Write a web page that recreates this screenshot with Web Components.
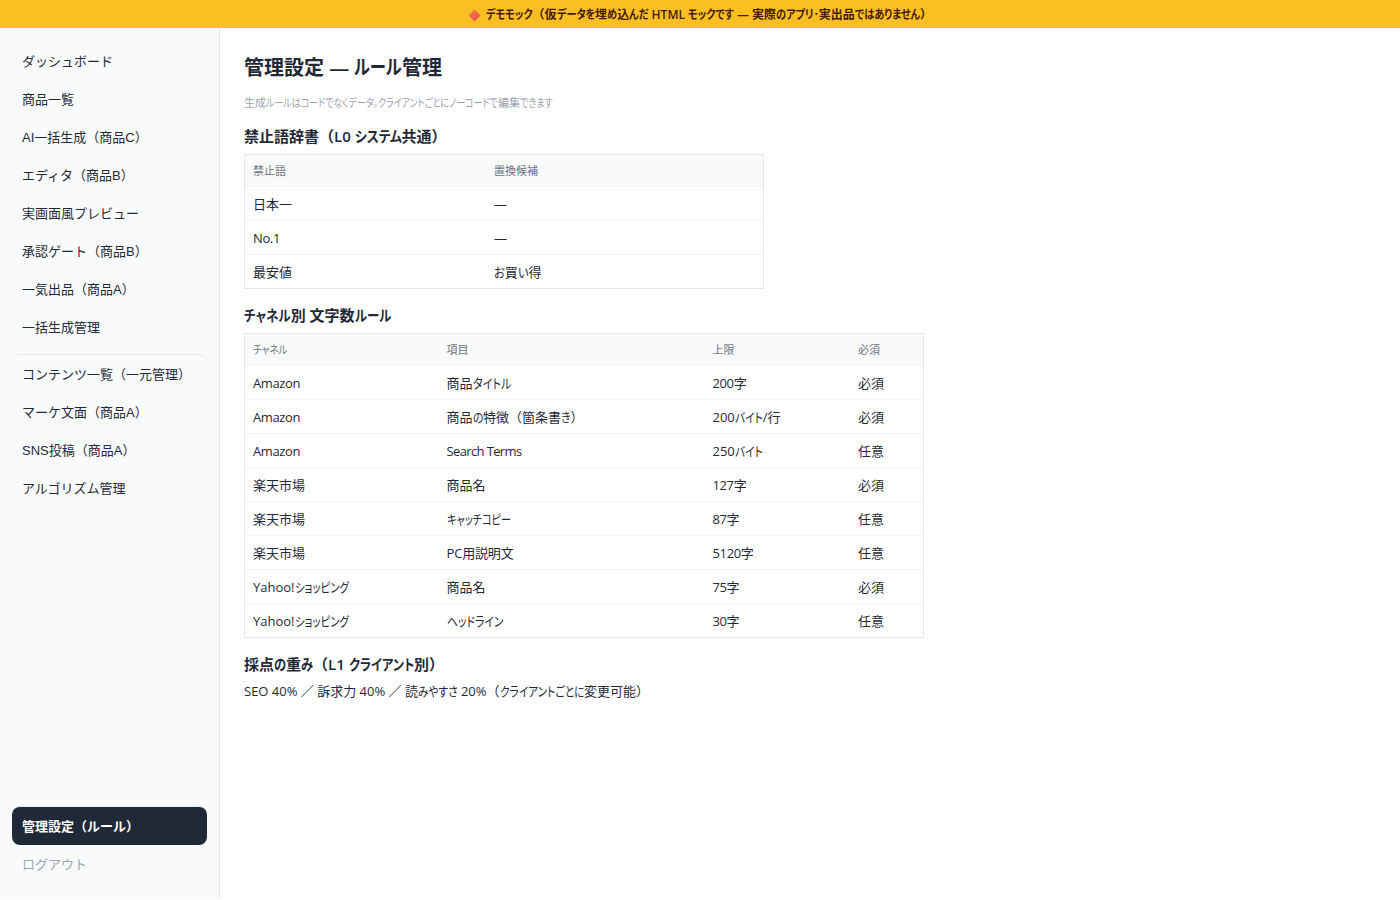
<!DOCTYPE html>
<html lang="ja">
<head>
<meta charset="utf-8">
<title>管理設定 — ルール管理</title>
<style>
    body {
        margin: 0;
        background: #fff;
        color: #1f2937;
        font: 13px/20px "Open Sans", "Noto Sans CJK JP", sans-serif;
    }
</style>
</head>
<body>
<demo-app>
    <demo-banner slot="banner"><fit-text w="446">デモモック（仮データを埋め込んだ HTML モックです — 実際のアプリ･実出品ではありません）</fit-text></demo-banner>

    <side-nav slot="nav">
        <nav-item>ダッシュボード</nav-item>
        <nav-item>商品一覧</nav-item>
        <nav-item>AI一括生成（商品C）</nav-item>
        <nav-item>エディタ（商品B）</nav-item>
        <nav-item>実画面風プレビュー</nav-item>
        <nav-item>承認ゲート（商品B）</nav-item>
        <nav-item>一気出品（商品A）</nav-item>
        <nav-item>一括生成管理</nav-item>
        <nav-item divided>コンテンツ一覧（一元管理）</nav-item>
        <nav-item>マーケ文面（商品A）</nav-item>
        <nav-item>SNS投稿（商品A）</nav-item>
        <nav-item>アルゴリズム管理</nav-item>
        <nav-item slot="bottom" active>管理設定（ルール）</nav-item>
        <nav-item slot="bottom" muted>ログアウト</nav-item>
    </side-nav>

    <page-heading>
        <fit-text w="198">管理設定 — ルール管理</fit-text>
        <fit-text slot="note" w="308.5">生成ルールはコードでなくデータ。クライアントごとにノーコードで編集できます</fit-text>
    </page-heading>

    <rule-section>
        <fit-text slot="title" w="202.5">禁止語辞書（L0 システム共通）</fit-text>
        <rule-table width="520" columns="241px 1fr">
            <rule-row head><fit-text>禁止語</fit-text><fit-text>置換候補</fit-text></rule-row>
            <rule-row><fit-text>日本一</fit-text><fit-text w="13.5">—</fit-text></rule-row>
            <rule-row><fit-text w="27">No.1</fit-text><fit-text w="13.5">—</fit-text></rule-row>
            <rule-row><fit-text>最安値</fit-text><fit-text w="47.5">お買い得</fit-text></rule-row>
        </rule-table>
    </rule-section>

    <rule-section>
        <fit-text slot="title" w="147">チャネル別 文字数ルール</fit-text>
        <rule-table width="680" columns="193.5px 266px 145.5px 1fr">
            <rule-row head><fit-text w="34.5">チャネル</fit-text><fit-text>項目</fit-text><fit-text>上限</fit-text><fit-text>必須</fit-text></rule-row>
            <rule-row><fit-text w="47">Amazon</fit-text><fit-text w="64.5">商品タイトル</fit-text><fit-text w="33.8">200字</fit-text><fit-text>必須</fit-text></rule-row>
            <rule-row><fit-text w="47">Amazon</fit-text><fit-text w="137">商品の特徴（箇条書き）</fit-text><fit-text w="68">200バイト/行</fit-text><fit-text>必須</fit-text></rule-row>
            <rule-row><fit-text w="47">Amazon</fit-text><fit-text w="75">Search Terms</fit-text><fit-text w="50">250バイト</fit-text><fit-text>任意</fit-text></rule-row>
            <rule-row><fit-text>楽天市場</fit-text><fit-text>商品名</fit-text><fit-text w="33.8">127字</fit-text><fit-text>必須</fit-text></rule-row>
            <rule-row><fit-text>楽天市場</fit-text><fit-text w="64">キャッチコピー</fit-text><fit-text w="26.7">87字</fit-text><fit-text>任意</fit-text></rule-row>
            <rule-row><fit-text>楽天市場</fit-text><fit-text w="67">PC用説明文</fit-text><fit-text w="41">5120字</fit-text><fit-text>任意</fit-text></rule-row>
            <rule-row><fit-text w="95.5">Yahoo!ショッピング</fit-text><fit-text>商品名</fit-text><fit-text w="26.7">75字</fit-text><fit-text>必須</fit-text></rule-row>
            <rule-row><fit-text w="95.5">Yahoo!ショッピング</fit-text><fit-text w="56.5">ヘッドライン</fit-text><fit-text w="26.7">30字</fit-text><fit-text>任意</fit-text></rule-row>
        </rule-table>
    </rule-section>

    <rule-section>
        <fit-text slot="title" w="200">採点の重み（L1 クライアント別）</fit-text>
        <weight-note><fit-text w="405">SEO 40% ／ 訴求力 40% ／ 読みやすさ 20%（クライアントごとに変更可能）</fit-text></weight-note>
    </rule-section>
</demo-app>

<script>
class BaseElement extends HTMLElement {
    constructor() {
        super();
        this.attachShadow({ mode: 'open' });
    }

    connectedCallback() {
        this.shadowRoot.innerHTML = this.template();
    }
}

class DemoApp extends BaseElement {
    template() {
        return `
            <style>
                :host { display: block; }
                .body { display: flex; height: 871px; }
                main { flex: 1; padding: 25px 24px 0; }
            </style>
            <slot name="banner"></slot>
            <div class="body">
                <slot name="nav"></slot>
                <main><slot></slot></main>
            </div>
        `;
    }
}

class DemoBanner extends BaseElement {
    template() {
        return `
            <style>
                :host {
                    display: flex;
                    align-items: center;
                    justify-content: center;
                    gap: 5px;
                    box-sizing: border-box;
                    height: 28px;
                    padding-top: 2px;
                    background: #fbbf24;
                    color: #451a03;
                    font-size: 12px;
                    font-weight: 600;
                }
                svg { display: block; }
            </style>
            <svg width="13" height="13" viewBox="0 0 13 13">
                <defs>
                    <linearGradient id="g" x1="0" y1="0" x2="1" y2="1">
                        <stop offset="0" stop-color="#f4794a"/>
                        <stop offset="1" stop-color="#ea5257"/>
                    </linearGradient>
                </defs>
                <path d="M6.5 .5 12.5 6.5 6.5 12.5 .5 6.5Z" fill="url(#g)"/>
            </svg>
            <slot></slot>
        `;
    }
}

class SideNav extends BaseElement {
    template() {
        return `
            <style>
                :host {
                    display: flex;
                    flex-direction: column;
                    box-sizing: border-box;
                    width: 220px;
                    padding: 14px 12px 16px;
                    background: #f9fafb;
                    border-right: 1px solid #e5e7eb;
                    font-family: "Liberation Sans", "Noto Sans CJK JP", sans-serif;
                }
                .spacer { flex: 1; }
            </style>
            <slot></slot>
            <div class="spacer"></div>
            <slot name="bottom"></slot>
        `;
    }
}

class NavItem extends BaseElement {
    template() {
        return `
            <style>
                :host {
                    display: block;
                    padding: 10px 10px 8px;
                    border-radius: 8px;
                    line-height: 20px;
                    white-space: nowrap;
                }
                :host([divided]) {
                    margin-top: 8px;
                    border-top: 1px solid #e5e7eb;
                }
                :host([active]) {
                    border-top: 1px solid #e5e7eb;
                    background: #1f2937;
                    color: #fff;
                    font-weight: 700;
                }
                :host([muted]) { color: #9ca3af; }
            </style>
            <slot></slot>
        `;
    }
}

class PageHeading extends BaseElement {
    template() {
        return `
            <style>
                :host { display: block; }
                h1 { margin: 0; font-size: 20px; line-height: 30px; font-weight: 600; }
                p { margin: 11px 0 0; font-size: 11px; line-height: 18px; color: #9ca3af; }
            </style>
            <h1><slot></slot></h1>
            <p><slot name="note"></slot></p>
        `;
    }
}

class RuleSection extends BaseElement {
    template() {
        return `
            <style>
                :host { display: block; margin-top: 14px; }
                :host(:first-of-type) { margin-top: 12px; }
                h2 { margin: 0 0 6px; font-size: 15px; line-height: 24px; font-weight: 600; }
            </style>
            <h2><slot name="title"></slot></h2>
            <slot></slot>
        `;
    }
}

class RuleTable extends BaseElement {
    template() {
        return `
            <style>
                :host {
                    --columns: ${this.getAttribute('columns')};
                    display: block;
                    box-sizing: border-box;
                    width: ${this.getAttribute('width')}px;
                    border: 1px solid #e5e7eb;
                }
                ::slotted(:last-child) { border-bottom: 0 !important; }
            </style>
            <slot></slot>
        `;
    }
}

class RuleRow extends BaseElement {
    template() {
        return `
            <style>
                :host {
                    display: grid;
                    grid-template-columns: var(--columns);
                    align-items: center;
                    height: 33px;
                    padding: 0 8px;
                    border-bottom: 1px solid #f3f4f6;
                }
                :host([head]) {
                    height: 31px;
                    background: #f9fafb;
                    color: #6b7280;
                    font-size: 11px;
                }
            </style>
            <slot></slot>
        `;
    }
}

class WeightNote extends BaseElement {
    template() {
        return `
            <style>
                :host { display: block; line-height: 18px; }
            </style>
            <slot></slot>
        `;
    }
}

// One line of text set to a given width. Kana are condensed to make up the
// difference; a line without kana is spaced evenly instead.
class FitText extends BaseElement {
    template() {
        const marked = this.textContent.replace(/[ぁ-んァ-ヶー･。]+/g, '<span>$&</span>');
        return `
            <style>
                :host { display: block; white-space: nowrap; }
                b { font-weight: inherit; }
                span {
                    display: inline-block;
                    font-feature-settings: "palt";
                    transform-origin: 0 50%;
                }
            </style>
            <b>${marked}</b>
        `;
    }

    connectedCallback() {
        super.connectedCallback();
        const target = parseFloat(this.getAttribute('w'));
        if (!target) return;
        const line = this.shadowRoot.querySelector('b');
        const extra = target - line.getBoundingClientRect().width;
        const spans = [...this.shadowRoot.querySelectorAll('span')];
        if (!spans.length) {
            line.style.letterSpacing = `${extra / this.textContent.length}px`;
            return;
        }
        const widths = spans.map(span => span.getBoundingClientRect().width);
        const total = widths.reduce((sum, width) => sum + width, 0);
        const scale = (total + extra) / total;
        spans.forEach((span, i) => {
            span.style.transform = `scaleX(${scale})`;
            span.style.marginRight = `${widths[i] * (scale - 1)}px`;
        });
    }
}

// containers first, so that the text is measured in its final font
customElements.define('demo-app', DemoApp);
customElements.define('demo-banner', DemoBanner);
customElements.define('side-nav', SideNav);
customElements.define('nav-item', NavItem);
customElements.define('page-heading', PageHeading);
customElements.define('rule-section', RuleSection);
customElements.define('rule-table', RuleTable);
customElements.define('rule-row', RuleRow);
customElements.define('weight-note', WeightNote);
customElements.define('fit-text', FitText);
</script>
</body>
</html>
